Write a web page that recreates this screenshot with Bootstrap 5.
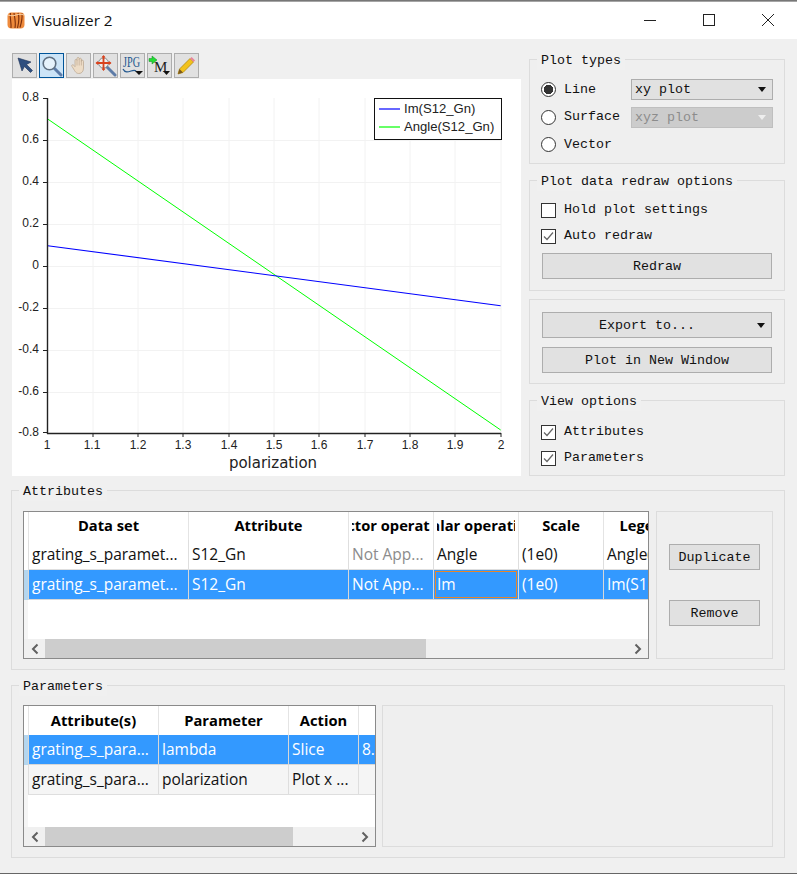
<!DOCTYPE html>
<html lang="en">
<head>
  <meta charset="UTF-8">
  <meta name="viewport" content="width=device-width, initial-scale=1.0">
  <title>Visualizer 2</title>
  <link href="https://cdn.jsdelivr.net/npm/bootstrap@5.3.3/dist/css/bootstrap.min.css" rel="stylesheet">
  <style>
    html, body { height: 874px; overflow: hidden; }
    body { background: #f0f0f0; font-family: "Liberation Mono", monospace; font-size: 13.33px; color: #111; }

    /* window frame */
    .top-edge { height: 2px; background: linear-gradient(#777 0 1px, #a5a5a5 1px 2px); }
    .title-bar { height: 37px; background: #fff; padding: 0 22px 0 7px; }
    .title-text { font-family: "Open Sans", sans-serif; font-size: 15.3px; color: #111; margin-left: 7px; }
    .win-btns { gap: 45px; margin-bottom: 2px; }
    .content-area { padding: 14px 12px 0 11px; }
    .bottom-edge { margin-top: 15px; height: 1px; background: #666; }

    /* plot side */
    .left-col { width: 510px; padding-left: 1px; }
    .right-col { width: 256px; margin-left: 8px; padding-top: 6px; }
    .tool-bar { gap: 2px; height: 24px; }
    .tool-btn { width: 25px; height: 25px; padding: 0; border: 1px solid #adadad; border-radius: 0; background: #e1e1e1; display: flex; align-items: center; justify-content: center; }
    .tool-btn.is-on { background: #cce4f7; border-color: #005499; }
    .plot-box { display: block; margin-top: 2px; background: #fff; }
    .plot-box text { font-family: "Liberation Sans", sans-serif; fill: #222; }
    .plot-box .axis-name { font-family: "DejaVu Sans", sans-serif; }

    /* group boxes */
    .grp { border: 1px solid #dcdcdc; background: #efefef; }
    .grp-title { display: table; height: 18px; line-height: 18px; padding: 0 4px; background: #f0f0f0; }
    .grp-types { height: 105px; margin-bottom: 16px; padding: 7px 11px 0; }
    .grp-redraw { height: 111px; margin-bottom: 8px; padding: 7px 11px 0; }
    .grp-export { height: 85px; margin-bottom: 16px; padding: 12px 12px 0; }
    .grp-view { height: 76px; padding: 7px 11px 0; }
    .grp-types .grp-title, .grp-redraw .grp-title, .grp-view .grp-title { margin: -15px 0 6px -4px; }
    .grp-view .grp-title { margin-bottom: 8px; }

    .opt-row { height: 27.5px; }
    .chk-row { height: 26px; }
    .opt-label { width: 90px; }
    .form-check-input.vz-radio, .form-check-input.vz-check { width: 15px; height: 15px; margin: 0 8px 0 0; flex: none; box-shadow: none; background-color: #fff; border: 1px solid #333; }
    .form-check-input.vz-radio:checked { background-color: #fff; background-image: radial-gradient(circle, #333 0 4.5px, #fff 5px); border-color: #333; }
    .form-check-input.vz-check { border-radius: 0; }
    .form-check-input.vz-check:checked { background-color: #fff; border-color: #333; background-size: 13px 13px; background-image: url("data:image/svg+xml,%3csvg xmlns='http://www.w3.org/2000/svg' viewBox='0 0 13 13'%3e%3cpath fill='none' stroke='%23666' stroke-width='1.2' d='M2 6.5l3 3 6-7'/%3e%3c/svg%3e"); }
    .opt-text { font-size: 13.33px; color: #111; }

    .vz-select.form-select { width: 142px; height: 21px; min-height: 0; padding: 0 20px 0 3px; line-height: 19px; border-radius: 0; border: 1px solid #adadad; background-color: #e1e1e1; font-size: 13.33px; color: #111; box-shadow: none;
      background-size: 8px 5px; background-position: right 6px center;
      background-image: url("data:image/svg+xml,%3csvg xmlns='http://www.w3.org/2000/svg' viewBox='0 0 8 5'%3e%3cpath d='M0 0h8L4 5z' fill='%23111'/%3e%3c/svg%3e"); }
    .vz-select.form-select:disabled { background-color: #ccc; border-color: #bfbfbf; color: #8c8c8c; opacity: 1;
      background-image: url("data:image/svg+xml,%3csvg xmlns='http://www.w3.org/2000/svg' viewBox='0 0 8 5'%3e%3cpath d='M0 0h8L4 5z' fill='%23eee'/%3e%3c/svg%3e"); }

    .vz-btn.btn { display: block; height: 26px; padding: 2px 0 0; line-height: 22px; border: 1px solid #adadad; border-radius: 0; background: #e1e1e1; color: #111; font-family: "Liberation Mono", monospace; font-size: 13.33px; }
    .vz-wide { width: 230px; }
    .redraw-btn { margin: 4px 0 0 1px; }
    .plot-new { margin-top: 9px; }
    .vz-caret { position: relative; padding-right: 20px !important; }
    .vz-caret::after { position: absolute; right: 6px; top: 10px; margin: 0; border-top: 5px solid #111; border-right: 4px solid transparent; border-left: 4px solid transparent; border-bottom: 0; }

    /* lower groups */
    .grp-attr { height: 180px; margin-top: 14px; padding: 0 11px; }
    .grp-param { height: 173px; margin-top: 15px; padding: 0 11px; }
    .grp-attr .grp-title, .grp-param .grp-title { margin: -8px 0 0 -4px; }
    .grp-body { gap: 7px; margin-top: 9px; }
    .grp-attr .grp-body { margin-top: 10px; }
    .side-box { border: 1px solid #dcdcdc; background: #efefef; }
    .dup-box { width: 117px; height: 148px; padding: 32px 12px 0 12px; }
    .dup-box .vz-btn { width: 91px; }
    .dup-box .vz-btn + .vz-btn { margin-top: 30px; }
    .empty-box { width: 391px; height: 142px; margin-left: -1px; }

    .tbl-frame { border: 1px solid #8a8a8a; background: #fff; }
    .tbl-attr { width: 626px; height: 148px; }
    .tbl-param { width: 353px; height: 142px; }
    .tbl-view { overflow: hidden; position: relative; }
    .tbl-attr .tbl-view { height: 127px; }
    .tbl-param .tbl-view { height: 121px; }
    .stripe-fill { position: absolute; left: 0; top: 0; bottom: 0; width: 4px; background: #f5f5f5; }

    .table.vz-table { table-layout: fixed; margin: 0; border-collapse: separate; border-spacing: 0; font-family: "Open Sans", sans-serif; font-size: 15.5px; position: relative; }
    .tbl-attr .table.vz-table { width: 665px; }
    .tbl-param .table.vz-table { width: 435px; }
    .col-stripe { width: 5px; }
    .col-160 { width: 160px; }
    .col-130 { width: 130px; }
    .col-100 { width: 100px; }
    .col-85 { width: 85px; }
    .col-70 { width: 70px; }
    .table.vz-table > :not(caption) > * > * { padding: 0 0 0 3px; height: 30px; overflow: hidden; white-space: nowrap; background-color: #fff; color: #111; box-shadow: none; border-width: 0 1px 1px 0; border-style: solid; border-color: #dedede; vertical-align: middle; }
    .table.vz-table > thead > * > * { height: 28px; padding: 0 3px; font-size: 14.7px; font-weight: 700; color: #000; border-bottom-width: 0; border-right-color: #e4e4e4; }
    .tbl-attr .table.vz-table > thead > * > * { padding-bottom: 2px; }
    .tbl-param .table.vz-table > thead > * > * { height: 29px; }
    .th-inner { display: flex; justify-content: center; overflow: hidden; white-space: nowrap; }
    .table.vz-table > :not(caption) > * > .row-stripe { padding: 0; background-color: #fff; border-bottom-width: 0; }
    .table.vz-table > tbody > tr.is-sel > td { background-color: #3399ff; color: #fff; border-color: #d7d7d7; }
    .table.vz-table > tbody > tr.is-sel > td.row-stripe { background-color: #b4d6ef; }
    .table.vz-table > tbody > tr.is-alt > td { background-color: #f5f5f5; }
    .table.vz-table > tbody > tr > td.is-muted { color: #8c8c8c; }
    .table.vz-table > tbody > tr > td.is-focus { padding: 0 1px; }
    .focus-cell { height: 27px; line-height: 25px; padding-left: 1px; border: 1px solid #e8862a; }

    .h-scroll { height: 19px; background: #f0f0f0; }
    .scroll-end { width: 21px; flex: none; display: flex; align-items: center; justify-content: center; }
    .scroll-thumb { background: #cdcdcd; height: 19px; }
    .thumb-attr { width: 381px; }
    .thumb-param { width: 248px; }
  </style>
</head>
<body>

<div class="top-edge"></div>

<!-- title bar -->
<div class="title-bar d-flex align-items-center">
  <svg width="18" height="17" viewBox="0 0 18 17">
    <rect x="0.5" y="0.5" width="17" height="16" rx="4" fill="#ee8a3c"/>
    <path d="M3.500 1c-1 4 1 9 .5 15M7 1c.5 4 2 9 1 15M11 1c1.500 4 1 9-.5 15M15 1.500c.5 4-.5 9-2 14" stroke="#7c2f0c" stroke-width="1.100" fill="none"/>
    <path d="M1 3c3 1 5 1 8 0s5-1 8 0" stroke="#f9d2a6" stroke-width="1" fill="none"/>
  </svg>
  <span class="title-text">Visualizer 2</span>
  <div class="win-btns d-flex align-items-center ms-auto">
    <svg width="14" height="14" viewBox="0 0 14 14"><path d="M1 7.500h12" stroke="#222" fill="none"/></svg>
    <svg width="14" height="14" viewBox="0 0 14 14"><rect x="1.500" y="1.500" width="11" height="11" stroke="#222" fill="none"/></svg>
    <svg width="14" height="14" viewBox="0 0 14 14"><path d="M1 1l12 12M13 1L1 13" stroke="#222" fill="none"/></svg>
  </div>
</div>

<div class="content-area">
  <div class="d-flex">
    <!-- plot side -->
    <div class="left-col">
      <div class="tool-bar d-flex">
        <button class="tool-btn" type="button">
          <svg width="20" height="20" viewBox="0 0 20 20"><path d="M3 2l4 13 2.500-4.500 6 6 2-2-6-6L16 6z" fill="#2f4f7f" stroke="#1c3156" stroke-width=".6"/></svg>
        </button>
        <button class="tool-btn is-on" type="button">
          <svg width="22" height="22" viewBox="0 0 22 22"><path d="M13 13l7 7" stroke="#5d7ca8" stroke-width="3" stroke-linecap="round"/><circle cx="8.500" cy="8.500" r="6.300" fill="#e6f2fb" stroke="#5f6f80" stroke-width="1.600"/></svg>
        </button>
        <button class="tool-btn" type="button">
          <svg width="20" height="21" viewBox="0 0 20 21"><path d="M3 11.500c-1-1.500.8-2.500 2-1l1 1.200V5.500c0-1.500 2-1.500 2 0V3.500c0-1.500 2.200-1.500 2.200 0v.8c0-1.500 2.200-1.500 2.200 0v2c0-1.400 2.100-1.400 2.100 0V13c0 3-1.500 5.500-4.500 5.500H9.500C6.500 18.500 5.500 15 3 11.500z" fill="#eddcc6" stroke="#bda994" stroke-width=".8"/><path d="M8 5.500v5M10.200 4v6.500M12.400 4.300v6.200" stroke="#bda994" stroke-width=".7" fill="none"/></svg>
        </button>
        <button class="tool-btn" type="button">
          <svg width="22" height="22" viewBox="0 0 22 22"><path d="M12 12l8 8" stroke="#5d7ca8" stroke-width="3" stroke-linecap="round"/><circle cx="8.500" cy="8" r="5" fill="#eee" stroke="#8a8a8a"/><path d="M8.500 1v14M1.500 8h14" stroke="#d8431f" stroke-width="1.800"/><path d="M8.500 0l2 2.500h-4zM8.500 16l2-2.500h-4zM.5 8L3 6v4zM16.500 8L14 6v4z" fill="#d8431f"/></svg>
        </button>
        <button class="tool-btn" type="button">
          <svg width="23" height="23" viewBox="0 0 23 23"><text x="2" y="13" font-family="Liberation Serif, serif" font-size="14" fill="#23588f" textLength="17" lengthAdjust="spacingAndGlyphs">JPG</text><path d="M2 15c2 4 5 3 8 2s4-1 5 0" stroke="#23588f" stroke-width="1.300" fill="none"/><path d="M14 17h8l-4 4z" fill="#111"/></svg>
        </button>
        <button class="tool-btn" type="button">
          <svg width="23" height="23" viewBox="0 0 23 23"><path d="M1 4.500h3V2l5 4-5 4V7.500H1z" fill="#22dd33" stroke="#118822" stroke-width=".5"/><text x="6" y="18" font-family="Liberation Serif, serif" font-size="15" fill="#222">M</text><path d="M15 17h7l-3.500 4z" fill="#111"/></svg>
        </button>
        <button class="tool-btn" type="button">
          <svg width="21" height="21" viewBox="0 0 21 21"><path d="M2 19l1.500-5L14 3.500l3.500 3.500L7 17.500z" fill="#f2c21c" stroke="#a8800c" stroke-width=".7"/><path d="M14 3.500l1.600-1.600 3.500 3.500L17.500 7z" fill="#e8869a"/><path d="M2 19l1.500-5 3.500 3.500z" fill="#7a5a20"/></svg>
        </button>
      </div>

      <svg class="plot-box" width="509" height="397" viewBox="12 79 509 397">
        <g stroke="#f2f2f2" fill="none">
          <path d="M93 98V433M138 98V433M183 98V433M229 98V433M274 98V433M319 98V433M365 98V433M410 98V433M455 98V433M501 98V433"/>
          <path d="M48 140.500H501M48 182.500H501M48 224.500H501M48 266.500H501M48 308.500H501M48 350.500H501M48 392.500H501"/>
        </g>
        <path d="M47.700 119L500.700 430" stroke="#00ff00" fill="none"/>
        <path d="M47.700 245.700L500.700 305.700" stroke="#0000ff" stroke-width="1.100" fill="none"/>
        <g stroke="#222" fill="none">
          <path d="M47.500 98V434M47 433.500H501" stroke-width="1.400"/>
          <path d="M43 98.500h4M43 140.500h4M43 182.500h4M43 224.500h4M43 266.500h4M43 308.500h4M43 350.500h4M43 392.500h4M43 432.500h4"/>
          <path d="M93 433v4M138 433v4M183 433v4M229 433v4M274 433v4M319 433v4M365 433v4M410 433v4M455 433v4M501 433v4"/>
        </g>
        <g font-size="12" text-anchor="end">
          <text x="39" y="101">0.8</text>
          <text x="39" y="143">0.6</text>
          <text x="39" y="185">0.4</text>
          <text x="39" y="227">0.2</text>
          <text x="39" y="269">0</text>
          <text x="39" y="311">-0.2</text>
          <text x="39" y="353">-0.4</text>
          <text x="39" y="395">-0.6</text>
          <text x="39" y="436">-0.8</text>
        </g>
        <g font-size="12" text-anchor="middle">
          <text x="47" y="449">1</text>
          <text x="92" y="449">1.1</text>
          <text x="138" y="449">1.2</text>
          <text x="183" y="449">1.3</text>
          <text x="229" y="449">1.4</text>
          <text x="274" y="449">1.5</text>
          <text x="319" y="449">1.6</text>
          <text x="365" y="449">1.7</text>
          <text x="410" y="449">1.8</text>
          <text x="455" y="449">1.9</text>
          <text x="501" y="449">2</text>
        </g>
        <text class="axis-name" x="273" y="468" font-size="15" text-anchor="middle">polarization</text>
        <rect x="374.500" y="98.500" width="127" height="41" fill="#fff" stroke="#111"/>
        <path d="M379 109h21" stroke="#0000ff" stroke-width="1.200"/>
        <path d="M379 127h21" stroke="#00ff00" stroke-width="1.200"/>
        <text x="404" y="113" font-size="13.100">Im(S12_Gn)</text>
        <text x="404" y="131" font-size="13.100">Angle(S12_Gn)</text>
      </svg>
    </div>

    <!-- right side options -->
    <div class="right-col">
      <div class="grp grp-types">
        <div class="grp-title">Plot types</div>
        <div class="opt-row d-flex align-items-center">
          <div class="opt-label d-flex align-items-center">
            <input class="form-check-input vz-radio" type="radio" name="ptype" id="ptLine" checked>
            <label class="opt-text" for="ptLine">Line</label>
          </div>
          <select class="form-select vz-select"><option>xy plot</option></select>
        </div>
        <div class="opt-row d-flex align-items-center">
          <div class="opt-label d-flex align-items-center">
            <input class="form-check-input vz-radio" type="radio" name="ptype" id="ptSurface">
            <label class="opt-text" for="ptSurface">Surface</label>
          </div>
          <select class="form-select vz-select" disabled><option>xyz plot</option></select>
        </div>
        <div class="opt-row d-flex align-items-center">
          <div class="opt-label d-flex align-items-center">
            <input class="form-check-input vz-radio" type="radio" name="ptype" id="ptVector">
            <label class="opt-text" for="ptVector">Vector</label>
          </div>
        </div>
      </div>

      <div class="grp grp-redraw">
        <div class="grp-title">Plot data redraw options</div>
        <div class="chk-row d-flex align-items-center">
          <input class="form-check-input vz-check" type="checkbox" id="holdPlot">
          <label class="opt-text" for="holdPlot">Hold plot settings</label>
        </div>
        <div class="chk-row d-flex align-items-center">
          <input class="form-check-input vz-check" type="checkbox" id="autoRedraw" checked>
          <label class="opt-text" for="autoRedraw">Auto redraw</label>
        </div>
        <button class="btn vz-btn vz-wide redraw-btn" type="button">Redraw</button>
      </div>

      <div class="grp grp-export">
        <button class="btn vz-btn vz-wide vz-caret dropdown-toggle" type="button">Export to...</button>
        <button class="btn vz-btn vz-wide plot-new" type="button">Plot in New Window</button>
      </div>

      <div class="grp grp-view">
        <div class="grp-title">View options</div>
        <div class="chk-row d-flex align-items-center">
          <input class="form-check-input vz-check" type="checkbox" id="viewAttr" checked>
          <label class="opt-text" for="viewAttr">Attributes</label>
        </div>
        <div class="chk-row d-flex align-items-center">
          <input class="form-check-input vz-check" type="checkbox" id="viewParam" checked>
          <label class="opt-text" for="viewParam">Parameters</label>
        </div>
      </div>
    </div>
  </div>

  <!-- attributes -->
  <div class="grp grp-attr">
    <div class="grp-title">Attributes</div>
    <div class="grp-body d-flex">
      <div class="tbl-frame tbl-attr">
        <div class="tbl-view">
          <div class="stripe-fill"></div>
          <table class="table vz-table">
            <colgroup><col class="col-stripe"><col class="col-160"><col class="col-160"><col class="col-85"><col class="col-85"><col class="col-85"><col class="col-85"></colgroup>
            <thead>
              <tr>
                <th class="row-stripe"></th>
                <th><div class="th-inner">Data set</div></th>
                <th><div class="th-inner">Attribute</div></th>
                <th><div class="th-inner">Vector operation</div></th>
                <th><div class="th-inner">Scalar operation</div></th>
                <th><div class="th-inner">Scale</div></th>
                <th><div class="th-inner">Legend</div></th>
              </tr>
            </thead>
            <tbody>
              <tr>
                <td class="row-stripe"></td>
                <td>grating_s_paramet...</td>
                <td>S12_Gn</td>
                <td class="is-muted">Not App...</td>
                <td>Angle</td>
                <td>(1e0)</td>
                <td>Angle(S12_Gn)</td>
              </tr>
              <tr class="is-sel">
                <td class="row-stripe"></td>
                <td>grating_s_paramet...</td>
                <td>S12_Gn</td>
                <td>Not App...</td>
                <td class="is-focus"><div class="focus-cell">Im</div></td>
                <td>(1e0)</td>
                <td>Im(S12_Gn)</td>
              </tr>
            </tbody>
          </table>
        </div>
        <div class="h-scroll d-flex justify-content-between">
          <div class="d-flex">
            <div class="scroll-end"><svg width="8" height="12" viewBox="0 0 8 12"><path d="M6.500 1.500L2 6l4.500 4.500" stroke="#606060" stroke-width="2" fill="none"/></svg></div>
            <div class="scroll-thumb thumb-attr"></div>
          </div>
          <div class="scroll-end"><svg width="8" height="12" viewBox="0 0 8 12"><path d="M1.500 1.500L6 6l-4.500 4.500" stroke="#606060" stroke-width="2" fill="none"/></svg></div>
        </div>
      </div>
      <div class="side-box dup-box">
        <button class="btn vz-btn" type="button">Duplicate</button>
        <button class="btn vz-btn" type="button">Remove</button>
      </div>
    </div>
  </div>

  <!-- parameters -->
  <div class="grp grp-param">
    <div class="grp-title">Parameters</div>
    <div class="grp-body d-flex">
      <div class="tbl-frame tbl-param">
        <div class="tbl-view">
          <div class="stripe-fill"></div>
          <table class="table vz-table">
            <colgroup><col class="col-stripe"><col class="col-130"><col class="col-130"><col class="col-70"><col class="col-100"></colgroup>
            <thead>
              <tr>
                <th class="row-stripe"></th>
                <th><div class="th-inner">Attribute(s)</div></th>
                <th><div class="th-inner">Parameter</div></th>
                <th><div class="th-inner">Action</div></th>
                <th></th>
              </tr>
            </thead>
            <tbody>
              <tr class="is-sel">
                <td class="row-stripe"></td>
                <td>grating_s_para...</td>
                <td>lambda</td>
                <td>Slice</td>
                <td>8.</td>
              </tr>
              <tr class="is-alt">
                <td class="row-stripe"></td>
                <td>grating_s_para...</td>
                <td>polarization</td>
                <td>Plot x ...</td>
                <td></td>
              </tr>
            </tbody>
          </table>
        </div>
        <div class="h-scroll d-flex justify-content-between">
          <div class="d-flex">
            <div class="scroll-end"><svg width="8" height="12" viewBox="0 0 8 12"><path d="M6.500 1.500L2 6l4.500 4.500" stroke="#606060" stroke-width="2" fill="none"/></svg></div>
            <div class="scroll-thumb thumb-param"></div>
          </div>
          <div class="scroll-end"><svg width="8" height="12" viewBox="0 0 8 12"><path d="M1.500 1.500L6 6l-4.500 4.500" stroke="#606060" stroke-width="2" fill="none"/></svg></div>
        </div>
      </div>
      <div class="side-box empty-box"></div>
    </div>
  </div>
</div>

<div class="bottom-edge"></div>

<script src="https://cdn.jsdelivr.net/npm/bootstrap@5.3.3/dist/js/bootstrap.bundle.min.js"></script>
</body>
</html>
